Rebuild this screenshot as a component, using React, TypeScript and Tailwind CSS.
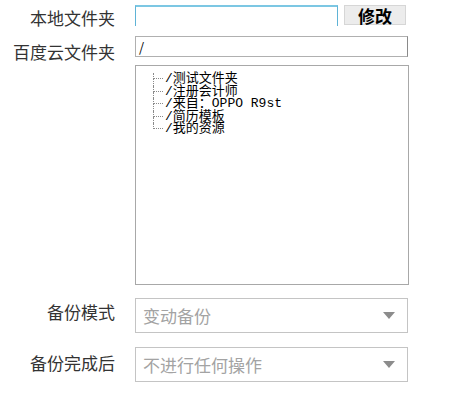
const TREE = ["/测试文件夹", "/注册会计师", "/来自：OPPO R9st", "/简历模板", "/我的资源"];

const labelFont = { fontFamily: '"Noto Sans CJK SC", "Noto Sans", sans-serif' };

function Caret() {
  return (
    <svg width="12" height="7" viewBox="0 0 12 7" className="shrink-0">
      <path d="M0 0 H12 L6 7 Z" fill="#8c8c8c" />
    </svg>
  );
}

function SelectBox({ value }: { value: string }) {
  return (
    <div className="flex h-[35px] w-[273px] items-center justify-between border border-[#c4c4c4] bg-white pl-[7px] pr-[12px]">
      <span className="text-[17px] leading-none text-[#a3a3a3]">{value}</span>
      <Caret />
    </div>
  );
}

export default function App() {
  return (
    <div className="h-[406px] w-[470px] bg-white text-[#333]" style={labelFont}>
      {/* local folder */}
      <div className="mt-[5px] flex h-[21px] items-start pt-0">
        <div className="h-[21px] w-[115px] pt-[2px] text-right text-[17px] leading-[21px]">本地文件夹</div>
        <div className="ml-[20px] h-[21px] w-[203px] border-x border-t-2 border-x-[#5fb3d6] border-t-[#7cc7e3] bg-white" />
        <button className="ml-[6px] h-[20px] w-[62px] border border-[#d6d6d6] bg-[#ececec] text-[17px] font-bold leading-none text-black">
          修改
        </button>
      </div>

      {/* baidu cloud folder */}
      <div className="mt-[10px] flex h-[21px] items-start">
        <div className="h-[21px] w-[115px] pt-[5px] text-right text-[17px] leading-[21px]">百度云文件夹</div>
        <div className="ml-[20px] flex h-[21px] w-[273px] items-center border border-[#b0b0b0] border-r-[#8a8a8a] pl-[3px] text-[13px] text-black">
          /
        </div>
      </div>

      {/* folder tree */}
      <div className="ml-[135px] mt-[8px] h-[220px] w-[274px] border border-[#a8a8a8] bg-white pl-[17px] pt-[7px]">
        <div style={{ fontFamily: '"Liberation Mono", "Noto Sans CJK SC", monospace' }} className="text-[13px] text-black">
          {TREE.map((t, i) => (
            <div key={t} className="flex h-[12.5px] items-center">
              <div className="flex h-full w-[10px] flex-col">
                <div className="h-1/2 border-b border-l border-dotted border-[#8a8a8a]" />
                <div className={`h-1/2 ${i < TREE.length - 1 ? "border-l border-dotted border-[#8a8a8a]" : ""}`} />
              </div>
              <span className="ml-[2px] block h-[12.5px] whitespace-pre leading-[12.5px]">{t}</span>
            </div>
          ))}
        </div>
      </div>

      {/* backup mode */}
      <div className="mt-[13px] flex h-[35px] items-start">
        <div className="h-[21px] w-[115px] pt-[3px] text-right text-[17px] leading-[21px]">备份模式</div>
        <div className="ml-[20px]">
          <SelectBox value="变动备份" />
        </div>
      </div>

      {/* after backup */}
      <div className="mt-[14px] flex h-[35px] items-start">
        <div className="h-[21px] w-[115px] pt-[5px] text-right text-[17px] leading-[21px]">备份完成后</div>
        <div className="ml-[20px]">
          <SelectBox value="不进行任何操作" />
        </div>
      </div>
    </div>
  );
}
